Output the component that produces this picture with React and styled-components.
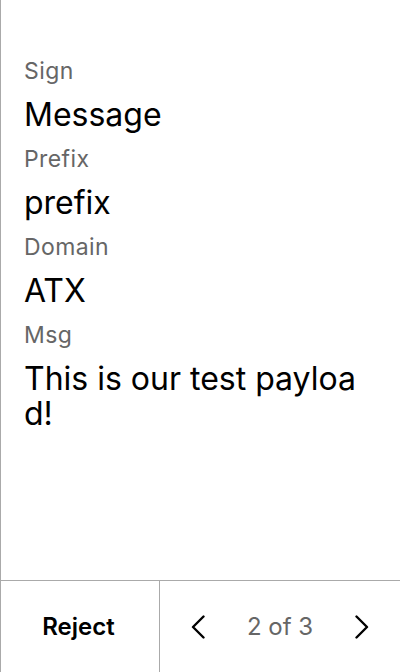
import React from "react";
import styled, { createGlobalStyle } from "styled-components";

const GlobalStyle = createGlobalStyle`
  html, body {
    margin: 0;
    padding: 0;
    background: #ffffff;
  }
  body {
    font-family: "Inter", "Noto Sans", sans-serif;
  }
`;

const fields = [
  { label: "Sign", value: "Message" },
  { label: "Prefix", value: "prefix" },
  { label: "Domain", value: "ATX" },
  { label: "Msg", value: "This is our test payload!" },
];

const Chevron = ({ dir }) => (
  <svg width="14" height="24" viewBox="0 0 14 24" fill="none">
    <polyline
      points={dir === "left" ? "12.5,1.5 2,12 12.5,22.5" : "1.5,1.5 12,12 1.5,22.5"}
      stroke="#000"
      strokeWidth="2.4"
      strokeLinecap="round"
      strokeLinejoin="round"
    />
  </svg>
);

const App = () => {
  return (
    <>
      <GlobalStyle />
      <Screen>
        <Content>
          {fields.map((f) => (
            <Field key={f.label}>
              <Label>{f.label}</Label>
              <Value>{f.value}</Value>
            </Field>
          ))}
        </Content>
        <Footer>
          <RejectButton>Reject</RejectButton>
          <Pager>
            <NavButton aria-label="previous">
              <Chevron dir="left" />
            </NavButton>
            <PageText>2 of 3</PageText>
            <NavButton aria-label="next">
              <Chevron dir="right" />
            </NavButton>
          </Pager>
        </Footer>
      </Screen>
    </>
  );
};

const Screen = styled.div`
  height: 672px;
  display: flex;
  flex-direction: column;
  border-left: 1px solid #aaaaaa;
  box-sizing: border-box;
`;

const Content = styled.div`
  flex: 1;
  padding: 58px 30px 0 23px;
  display: flex;
  flex-direction: column;
  gap: 14px;
`;

const Field = styled.div`
  display: flex;
  flex-direction: column;
  gap: 13px;
`;

const Label = styled.div`
  font-size: 23px;
  line-height: 26px;
  color: #666666;
  letter-spacing: 0.4px;
`;

const Value = styled.div`
  font-size: 32px;
  line-height: 35px;
  color: #000000;
  word-break: break-all;
`;

const Footer = styled.div`
  height: 92px;
  border-top: 1px solid #aaaaaa;
  display: grid;
  grid-template-columns: 159px 1fr;
  box-sizing: border-box;
`;

const RejectButton = styled.button`
  border: none;
  border-right: 1px solid #aaaaaa;
  background: transparent;
  font-family: "Inter", "Noto Sans", sans-serif;
  font-size: 24px;
  font-weight: 600;
  color: #000000;
  padding: 0 3px 0 0;
  cursor: pointer;
`;

const Pager = styled.div`
  display: flex;
  align-items: center;
  justify-content: space-between;
  padding: 0 31px 0 31px;
`;

const NavButton = styled.button`
  border: none;
  background: transparent;
  padding: 0;
  display: flex;
  align-items: center;
  cursor: pointer;
`;

const PageText = styled.span`
  font-size: 24px;
  color: #666666;
`;

export default App;
